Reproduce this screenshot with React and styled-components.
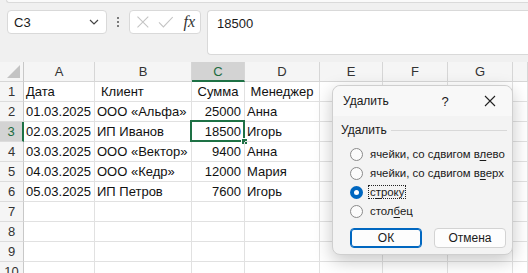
import React from 'react';
import styled, { createGlobalStyle, css } from 'styled-components';

const GlobalStyle = createGlobalStyle`
    html, body {
        margin: 0;
        padding: 0;
        background: #f0f0f0;
        font-family: "Liberation Sans", Arial, sans-serif;
    }
    body {
        width: 528px;
        height: 273px;
        overflow: hidden;
    }
`;

const Page = styled.div`
    position: relative;
    width: 528px;
    height: 273px;
    overflow: hidden;
    background: #f0f0f0;
`;

const RibbonEdge = styled.div`
    height: 2px;
    margin-left: 6px;
    background: #fafafa;
    border: 1px solid #dadada;
    border-top: none;
    border-right: none;
    border-radius: 0 0 0 6px;
`;

const FormulaBar = styled.div`
    display: flex;
    align-items: flex-start;
    padding: 7px 0 0 7px;
    height: 45px;
`;

const NameBox = styled.div`
    width: 100px;
    height: 24px;
    box-sizing: border-box;
    display: flex;
    align-items: center;
    justify-content: space-between;
    padding: 0 7px 0 6px;
    background: #fff;
    border: 1px solid #d9d9d9;
    border-radius: 4px;
    font-size: 13px;
    color: #1a1a1a;
`;

const Dots = styled.div`
    width: 22px;
    height: 24px;
    display: flex;
    flex-direction: column;
    align-items: center;
    justify-content: center;
    gap: 2px;
    span {
        width: 2px;
        height: 2px;
        background: #555;
        border-radius: 1px;
    }
`;

const FxBox = styled.div`
    width: 72px;
    height: 24px;
    box-sizing: border-box;
    display: flex;
    align-items: center;
    gap: 8px;
    padding: 0 5px 0 6px;
    background: #fff;
    border: 1px solid #d9d9d9;
    border-radius: 4px;
`;

const Fx = styled.span`
    font-family: "Liberation Serif", "Times New Roman", serif;
    font-style: italic;
    font-size: 16px;
    color: #333;
    margin-left: 2px;
`;

const FormulaInput = styled.div`
    flex: 1;
    margin-left: 6px;
    height: 45px;
    box-sizing: border-box;
    padding: 5px 9px;
    background: #fff;
    border: 1px solid #d9d9d9;
    border-right: none;
    border-radius: 4px 0 0 4px;
    font-size: 13px;
    color: #1a1a1a;
`;

const Sheet = styled.div`
    margin-top: 7px;
    display: grid;
    grid-template-columns: 24px 71px 97px 53px 75px 63px 65px 65px 1fr;
    grid-auto-rows: 20px;
    background: #fff;
`;

const Cell = styled.div`
    position: relative;
    box-sizing: border-box;
    border-right: 1px solid #e1e1e1;
    border-bottom: 1px solid #e1e1e1;
    font-size: 13px;
    line-height: 19px;
    color: #111;
    white-space: nowrap;
    overflow: visible;
    text-align: ${p => p.$align || 'left'};
    padding: 0 ${p => p.$padR ?? 2}px 0 ${p => p.$padL ?? 2}px;
`;

const HeadCell = styled(Cell)`
    background: #f5f5f5;
    border-color: #d6d6d6;
    color: #333;
    text-align: center;
    padding: 0;
    ${p => p.$active && css`
        background: #d3d3d3;
        color: #1d6b40;
        border-bottom: 2px solid #1e7145;
    `}
`;

const RowHead = styled(Cell)`
    background: #f5f5f5;
    border-right: 1px solid #c8c8c8;
    border-bottom-color: #dcdcdc;
    color: #333;
    text-align: center;
    padding: 0;
    ${p => p.$active && css`
        background: #d3d3d3;
        color: #1d6b40;
        border-right: 2px solid #1e7145;
    `}
`;

const Corner = styled(Cell)`
    background: #f5f5f5;
    border-right: 1px solid #c8c8c8;
    border-bottom-color: #d6d6d6;
    &::after {
        content: "";
        position: absolute;
        right: 3px;
        bottom: 3px;
        width: 0;
        height: 0;
        border-left: 13px solid transparent;
        border-bottom: 13px solid #c3c3c3;
    }
`;

const Selection = styled.div`
    position: absolute;
    left: -2px;
    top: -2px;
    right: -1px;
    bottom: -1px;
    border: 2px solid #1e7145;
    pointer-events: none;
    &::after {
        content: "";
        position: absolute;
        right: -5px;
        bottom: -5px;
        width: 5px;
        height: 5px;
        background: #1e7145;
        border: 1px solid #fff;
    }
`;

/* dialog */

const Dialog = styled.div`
    position: absolute;
    left: 332px;
    top: 85px;
    width: 181px;
    height: 170px;
    box-sizing: border-box;
    background: #f3f3f3;
    border: 1px solid #cfcfcf;
    border-radius: 8px;
    box-shadow: 0 6px 18px rgba(0, 0, 0, 0.22);
    font-size: 12px;
    color: #1a1a1a;
    display: flex;
    flex-direction: column;
`;

const TitleBar = styled.div`
    height: 30px;
    display: flex;
    align-items: center;
    padding-left: 10px;
    background: #f8f8f8;
    border-radius: 8px 8px 0 0;
`;

const Title = styled.span`
    flex: 1;
`;

const TitleButton = styled.span`
    width: 24px;
    text-align: center;
    font-size: 13px;
    margin-right: ${p => p.$gap || 0}px;
    display: flex;
    justify-content: center;
`;

const Body = styled.div`
    padding: 6px 5px 0 8px;
    display: flex;
    flex-direction: column;
`;

const GroupLabel = styled.div`
    display: flex;
    align-items: center;
    gap: 4px;
    height: 16px;
    &::after {
        content: "";
        flex: 1;
        height: 1px;
        background: #d8d8d8;
    }
`;

const Options = styled.div`
    margin-top: 8px;
    padding-left: 9px;
    display: flex;
    flex-direction: column;
    gap: 3px;
`;

const Option = styled.label`
    display: flex;
    align-items: center;
    gap: 6px;
    height: 16px;
    white-space: nowrap;
    font-size: 11.4px;
`;

const Radio = styled.span`
    width: 13px;
    height: 13px;
    box-sizing: border-box;
    border-radius: 50%;
    flex: none;
    ${p => p.$checked ? css`
        background: #0067c0;
        display: flex;
        align-items: center;
        justify-content: center;
        &::after {
            content: "";
            width: 5px;
            height: 5px;
            border-radius: 50%;
            background: #fff;
        }
    ` : css`
        border: 1px solid #8a8a8a;
        background: #fbfbfb;
    `}
`;

const OptionText = styled.span`
    padding: 0 1px;
    ${p => p.$focused && css`
        outline: 1px dotted #222;
        outline-offset: 0;
    `}
    u {
        text-underline-offset: 2px;
    }
`;

const Buttons = styled.div`
    display: flex;
    gap: 12px;
    margin-top: 9px;
    padding-left: 9px;
`;

const Button = styled.button`
    width: 72px;
    height: 20px;
    box-sizing: border-box;
    padding: 0;
    font-family: inherit;
    font-size: 12px;
    color: #1a1a1a;
    background: #fdfdfd;
    border-radius: 4px;
    border: 1px solid ${p => (p.$primary ? '#0067c0' : '#d3d3d3')};
    ${p => p.$primary && css`
        box-shadow: inset 0 0 0 1px #0067c0;
    `}
`;

const columns = ['A', 'B', 'C', 'D', 'E', 'F', 'G', ''];

const rows = [
    [{ t: 'Дата' }, { t: 'Клиент', l: 6 }, { t: 'Сумма', a: 'center' }, { t: 'Менеджер', a: 'center' }],
    [{ t: '01.03.2025', a: 'right', r: 4 }, { t: 'ООО «Альфа»' }, { t: '25000', a: 'right', r: 3 }, { t: 'Анна' }],
    [{ t: '02.03.2025', a: 'right', r: 4 }, { t: 'ИП Иванов' }, { t: '18500', a: 'right', r: 3, sel: true }, { t: 'Игорь' }],
    [{ t: '03.03.2025', a: 'right', r: 4 }, { t: 'ООО «Вектор»' }, { t: '9400', a: 'right', r: 3 }, { t: 'Анна' }],
    [{ t: '04.03.2025', a: 'right', r: 4 }, { t: 'ООО «Кедр»' }, { t: '12000', a: 'right', r: 3 }, { t: 'Мария' }],
    [{ t: '05.03.2025', a: 'right', r: 4 }, { t: 'ИП Петров' }, { t: '7600', a: 'right', r: 3 }, { t: 'Игорь' }],
    [], [], [], [],
];

function Chevron() {
    return (
        <svg width="10" height="6" viewBox="0 0 10 6">
            <path d="M1 1l4 4 4-4" fill="none" stroke="#444" strokeWidth="1.2" />
        </svg>
    );
}

function CancelIcon() {
    return (
        <svg width="14" height="14" viewBox="0 0 14 14">
            <path d="M1.5 1.5l11 11M12.5 1.5l-11 11" stroke="#c4c4c4" strokeWidth="1.1" />
        </svg>
    );
}

function EnterIcon() {
    return (
        <svg width="16" height="12" viewBox="0 0 16 12">
            <path d="M1 6.5l4.5 4.5L15 1" fill="none" stroke="#c4c4c4" strokeWidth="1.1" />
        </svg>
    );
}

function CloseIcon() {
    return (
        <svg width="12" height="12" viewBox="0 0 12 12">
            <path d="M1 1l10 10M11 1L1 11" stroke="#222" strokeWidth="1.1" />
        </svg>
    );
}

function App() {
    return (
        <Page>
            <GlobalStyle />
            <RibbonEdge />
            <FormulaBar>
                <NameBox>
                    <span>C3</span>
                    <Chevron />
                </NameBox>
                <Dots><span /><span /><span /></Dots>
                <FxBox>
                    <CancelIcon />
                    <EnterIcon />
                    <Fx>fx</Fx>
                </FxBox>
                <FormulaInput>18500</FormulaInput>
            </FormulaBar>

            <Sheet>
                <Corner />
                {columns.map((c, i) => (
                    <HeadCell key={i} $active={c === 'C'}>{c}</HeadCell>
                ))}
                {rows.map((row, r) => (
                    <React.Fragment key={r}>
                        <RowHead $active={r === 2}>{r + 1}</RowHead>
                        {columns.map((_, c) => {
                            const cell = row[c];
                            return (
                                <Cell
                                    key={c}
                                    $align={cell?.a}
                                    $padL={cell?.l}
                                    $padR={cell?.r}
                                >
                                    {cell?.t}
                                    {cell?.sel && <Selection />}
                                </Cell>
                            );
                        })}
                    </React.Fragment>
                ))}
            </Sheet>

            <Dialog>
                <TitleBar>
                    <Title>Удалить</Title>
                    <TitleButton $gap={21}>?</TitleButton>
                    <TitleButton $gap={10}><CloseIcon /></TitleButton>
                </TitleBar>
                <Body>
                    <GroupLabel>Удалить</GroupLabel>
                    <Options>
                        <Option><Radio /><OptionText>ячейки, со сдвигом в<u>л</u>ево</OptionText></Option>
                        <Option><Radio /><OptionText>ячейки, со сдвигом в<u>в</u>ерх</OptionText></Option>
                        <Option><Radio $checked /><OptionText $focused>с<u>т</u>року</OptionText></Option>
                        <Option><Radio /><OptionText>стол<u>б</u>ец</OptionText></Option>
                    </Options>
                    <Buttons>
                        <Button $primary>ОК</Button>
                        <Button>Отмена</Button>
                    </Buttons>
                </Body>
            </Dialog>
        </Page>
    );
}

export default App;
